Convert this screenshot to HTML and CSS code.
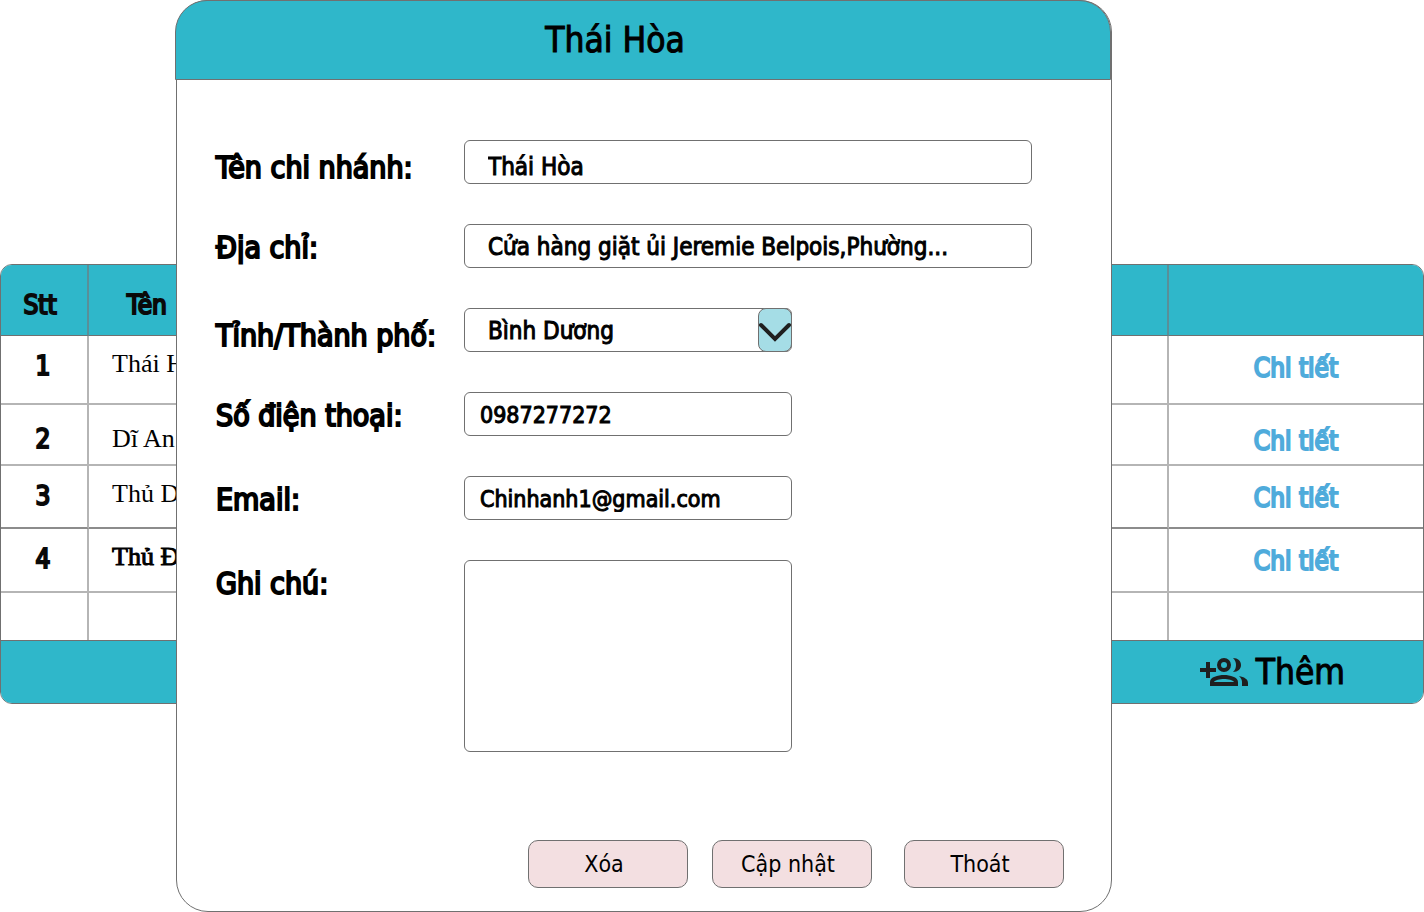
FILE: index.html
```html
<!DOCTYPE html>
<html lang="vi">
<head>
<meta charset="utf-8">
<meta name="viewport" content="width=device-width, initial-scale=1">
<title>Thái Hòa</title>
<link rel="stylesheet" href="styles.css">
</head>
<body>
<main class="page">
  <section class="branches">
    <table class="branch-table">
      <colgroup><col class="col-index"><col><col class="col-action"></colgroup>
      <thead>
        <tr><th scope="col" class="head-index">Stt</th><th scope="col" class="head-name">Tên</th><th></th></tr>
      </thead>
      <tbody>
        <tr class="row-1"><td class="index">1</td><td class="name">Thái Hòa</td><td class="action"><a href="#">Chi tiết</a></td></tr>
        <tr class="row-2"><td class="index">2</td><td class="name">Dĩ An</td><td class="action"><a href="#">Chi tiết</a></td></tr>
        <tr class="row-3"><td class="index">3</td><td class="name">Thủ Dầu</td><td class="action"><a href="#">Chi tiết</a></td></tr>
        <tr class="row-4"><td class="index">4</td><td class="name">Thủ Đức</td><td class="action"><a href="#">Chi tiết</a></td></tr>
        <tr class="row-empty"><td></td><td></td><td></td></tr>
      </tbody>
    </table>
    <div class="branch-footer">
      <button class="add" type="button">
        <svg class="add-icon" viewBox="0 0 48 30" aria-hidden="true">
          <path fill="#1f1f1f" d="M6 5h4v6h6v4h-6v6H6v-6H0v-4h6z"/>
          <circle cx="24" cy="8" r="5" fill="none" stroke="#1f1f1f" stroke-width="4"/>
          <path fill="#1f1f1f" d="M33 1c5 0 8 3 8 7s-3 7-8 7c2-2 3-4 3-7s-1-5-3-7z"/>
          <path fill="#1f1f1f" fill-rule="evenodd" d="M10 29v-4c0-5 8-7 14-7s14 2 14 7v4zM14 25h20c-1-2-6-3-10-3s-9 1-10 3z"/>
          <path fill="#1f1f1f" d="M39 19c5 1 9 3 9 7v3h-6v-4c0-2-1-4-3-6z"/>
        </svg>
        Thêm
      </button>
    </div>
  </section>

  <section class="dialog" role="dialog" aria-labelledby="dialog-title">
    <header class="dialog-head"><h1 id="dialog-title">Thái Hòa</h1></header>
    <form class="form">
      <label class="label low" for="branch">Tên chi nhánh:</label>
      <input class="field wide low" id="branch" type="text" value="Thái Hòa">
      <label class="label" for="address">Địa chỉ:</label>
      <input class="field wide" id="address" type="text" value="Cửa hàng giặt ủi Jeremie Belpois,Phường...">
      <label class="label low" for="city">Tỉnh/Thành phố:</label>
      <div class="select">
        <select class="field indent" id="city"><option>Bình Dương</option></select>
        <svg class="select-arrow" viewBox="0 0 32 42" aria-hidden="true"><path d="M2 16l14 14 14-14" fill="none" stroke="#1f1f1f" stroke-width="4" stroke-linecap="round"/></svg>
      </div>
      <label class="label" for="phone">Số điện thoại:</label>
      <input class="field" id="phone" type="tel" value="0987277272">
      <label class="label" for="email">Email:</label>
      <input class="field" id="email" type="email" value="Chinhanh1@gmail.com">
      <label class="label" for="note">Ghi chú:</label>
      <textarea class="field note" id="note"></textarea>
    </form>
    <footer class="actions">
      <button class="button" type="button">Xóa</button>
      <button class="button" type="button">Cập nhật</button>
      <button class="button exit" type="button">Thoát</button>
    </footer>
  </section>
</main>
</body>
</html>
```
FILE: styles.css
```css
* { box-sizing: border-box; }

body {
  margin: 0;
  background: #fff;
  color: #000;
  font-family: "DejaVu Sans Condensed", "DejaVu Sans", "Noto Sans", sans-serif;
}

.page {
  position: relative;
  min-height: 100vh;
  padding-top: 264px;
}

/* Branch list */
.branches {
  overflow: hidden;
  border: 1px solid #707070;
  border-radius: 12px;
}

.branch-table {
  width: 100%;
  table-layout: fixed;
  border-collapse: separate;
  border-spacing: 0;
}

.col-index { width: 88px; }
.col-action { width: 254px; }

.branch-table th,
.branch-table td {
  padding: 0;
  border-right: 2px solid #b5b5b5;
  border-bottom: 2px solid #b5b5b5;
  vertical-align: top;
  line-height: 32px;
  white-space: nowrap;
}

.branch-table th {
  height: 71px;
  padding-top: 24px;
  background: #2fb7ca;
  border-right-color: #5a8f98;
  border-bottom: 1px solid #707070;
  font-size: 26px;
  font-weight: 400;
  -webkit-text-stroke: 2px #0a0a0a;
}

.branch-table th:last-child,
.branch-table td:last-child { border-right: 0; }
.branch-table .head-index { padding-right: 8px; }
.branch-table .head-name { padding-left: 38px; text-align: left; }
.branch-table .row-empty td { height: 47px; border-bottom: 0; }

.row-1 td { height: 69px; }
.row-2 td { height: 61px; }
.row-3 td { height: 63px; }
.row-4 td { height: 64px; }
.branch-table .row-3 td { border-bottom-color: #8c8c8c; }

.branch-table .index {
  padding-top: 14px;
  padding-right: 2px;
  font-size: 26px;
  text-align: center;
  -webkit-text-stroke: 2px #0a0a0a;
}
.branch-table .name {
  padding-top: 12px;
  padding-left: 23px;
  font-family: "Liberation Serif", serif;
  font-size: 26px;
}
.branch-table .action {
  padding-top: 16px;
  font-size: 26px;
  text-align: center;
}
.branch-table .row-2 .index { padding-top: 18px; }
.branch-table .row-2 .name { padding-top: 18px; }
.branch-table .row-2 .action { padding-top: 20px; }
.row-4 .name { -webkit-text-stroke: 1px #000; }

.action a {
  color: #4fabdb;
  text-decoration: none;
  -webkit-text-stroke: 2px #4fabdb;
}

.branch-footer {
  display: flex;
  justify-content: flex-end;
  height: 63px;
  padding-right: 78px;
  background: #2fb7ca;
  border-top: 1px solid #707070;
}

.add {
  display: flex;
  align-items: center;
  gap: 8px;
  padding: 0;
  border: 0;
  background: none;
  color: #000;
  font: inherit;
  font-size: 35px;
  -webkit-text-stroke: 1px #000;
}
.add-icon { width: 48px; height: 30px; }

/* Branch dialog */
.dialog {
  position: absolute;
  top: 0;
  left: 176px;
  right: 312px;
  background: #fff;
  border: 1px solid #707070;
  border-radius: 32px;
}

.dialog-head {
  height: 80px;
  margin: -1px 0 0 -2px;
  padding-right: 56px;
  background: #2fb7ca;
  border: 1px solid #707070;
  border-radius: 32px 32px 0 0;
  text-align: center;
}

.dialog-head h1 {
  margin: 0;
  font-size: 35px;
  font-weight: 400;
  line-height: 78px;
  -webkit-text-stroke: 1px #000;
}

.form {
  display: grid;
  grid-template-columns: 248px minmax(0, 1fr);
  row-gap: 40px;
  padding: 60px 79px 0 39px;
}

.label {
  font-size: 30px;
  line-height: 48px;
  white-space: nowrap;
  height: 44px;
  -webkit-text-stroke: 2px #000;
}
.label.low { padding-top: 4px; }

.field {
  width: 328px;
  height: 44px;
  padding: 2px 15px 0;
  border: 1px solid #707070;
  border-radius: 6px;
  background: #fff;
  color: #000;
  font: inherit;
  font-size: 23px;
  -webkit-text-stroke: 1px #000;
}
.field.wide,
.field.indent { padding: 2px 23px 0; font-size: 24px; }
.field.wide { width: 100%; }
.field.indent { appearance: none; }
.field.low { padding-top: 10px; }
.field.note { height: 192px; resize: none; display: block; }

.select { position: relative; width: 328px; height: 44px; }
.select-arrow {
  position: absolute;
  top: 0;
  right: 0;
  width: 34px;
  height: 44px;
  border: 1px solid #707070;
  border-radius: 8px;
  background: #a5dde6;
  pointer-events: none;
}

.actions {
  display: flex;
  justify-content: flex-end;
  gap: 24px;
  padding: 88px 47px 23px;
}

.button {
  width: 160px;
  height: 48px;
  padding: 0 8px 0 0;
  border: 1px solid #707070;
  border-radius: 10px;
  background: #f3dfe1;
  color: #000;
  font: inherit;
  font-size: 23px;
}
.button.exit { margin-left: 8px; }
```
